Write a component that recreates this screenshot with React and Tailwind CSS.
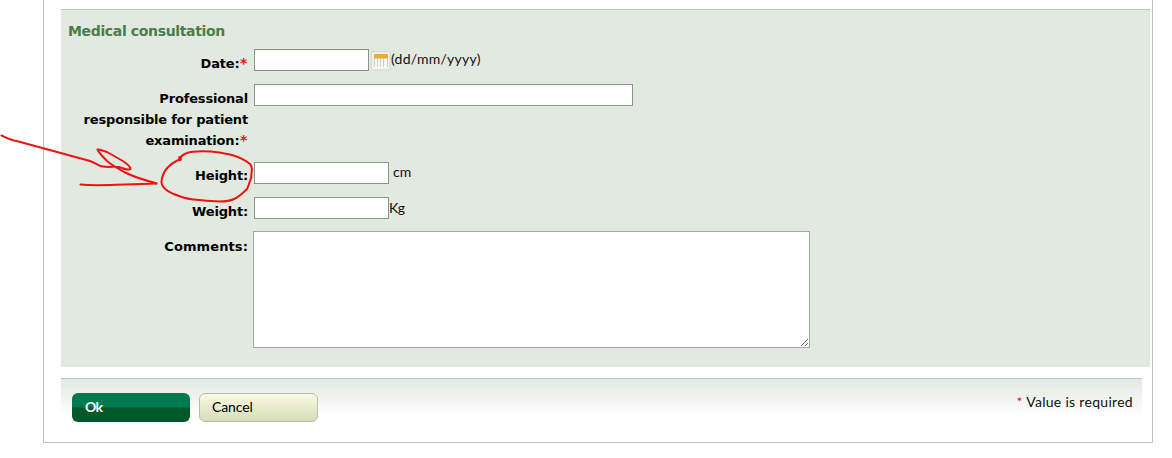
const inputClass = 'block h-[22px] flex-shrink-0 border border-[#8a968c] bg-white outline-none'
const hintClass = 'whitespace-nowrap [font-family:Lato,sans-serif] text-[14px] leading-[18px] text-[#111]'

function Row({ label, required, className, labelClass = 'pt-[4px] tracking-[-0.17px]', children }) {
  return (
    <div className={`flex items-start ${className}`}>
      <div
        className={`mr-[6px] w-[187px] flex-shrink-0 pl-[15px] text-right text-[13px] font-bold leading-[21px] text-black ${labelClass}`}
      >
        {label}:
        {required && (
          <span className="ml-[0.5px] inline-block w-[8px] text-left text-[14px] leading-[16px] text-[#e8141c]">*</span>
        )}
      </div>
      {children}
    </div>
  )
}

function CalendarIcon() {
  return (
    <svg className="mt-[2px] ml-[2px] flex-shrink-0" width="20" height="20" viewBox="0 0 20 20">
      <rect x="0.5" y="0.5" width="18.5" height="18.5" rx="1.5" fill="#f1f1ec" stroke="#d5d8d1" />
      <rect x="3" y="7" width="14" height="10" fill="#fdfdfb" />
      <path d="M3.5 7v9M6.5 7v9M9.5 7v9M12.5 7v9M16.5 7v9" stroke="#c9c9c7" />
      <path d="M3 10.5h14M3 13.5h14" stroke="#e3e3e1" strokeWidth="0.7" />
      <rect x="3" y="3" width="14" height="4.500" rx="0.7" fill="#e9ad35" />
    </svg>
  )
}

// Hand-drawn arrow and ring around the Height label
function Annotation() {
  return (
    <svg
      className="pointer-events-none absolute top-[125px] left-0"
      width="270"
      height="90"
      viewBox="0 0 270 90"
      fill="none"
      stroke="#ee1414"
      strokeWidth="2"
      strokeLinecap="round"
      strokeLinejoin="round"
    >
      <path d="M1.5 10.5 C5 12 8 14 14 15.5 C22 17 27 19 35 21 L90 36 C96 38 98 41 103 41.5 C112 43 117 40 122 43 C126 45 131 45 130.500 43.500 C130 41 126 38 122 35.500 L107 27 C102 25 99 24 97.500 24.500 C98 27 103 32 107 36 C113 41 119 44 124 47 C136 53 145 55 156.500 58.500" />
      <path d="M80.500 59.500 C100 61.500 123 59 156.500 58.500" />
      <path d="M180.500 34 C169 39 162 47 161.500 57 C161.500 64 170 68 179 71 C185 73.500 190 74.500 199 75 C213 76.500 226 78 234 74 C239 72 244 67 247 64 C249 60 250 56 251 53 C252 45 252.500 42 250 39 C244 34 236 31 230 29.500 C223 28 218 27 211 26.500 C201 26 192 26 187 28 C184 29 181 31 179.500 34" />
      <path d="M180 32.500v2" strokeWidth="3.5" />
    </svg>
  )
}

export default function App() {
  return (
    <div className="relative h-[458px] w-[1172px] overflow-hidden bg-white [font-family:'DejaVu_Sans',Verdana,sans-serif]">
      <div className="ml-[43px] h-[443px] w-[1110px] border-x border-b border-[#bcc4c0] pt-[9px] pl-[17px]">
        {/* Form panel */}
        <div className="h-[358px] w-[1089px] border-t border-[#bcc8c0] bg-[#e1e9e0]">
          <h2 className="h-[39px] pt-[11px] pl-[7px] text-[14px] font-bold leading-[20px] tracking-[-0.35px] text-[#4a7d4c]">
            Medical consultation
          </h2>

          <Row label="Date" required className="h-[35px]">
            <input className={`${inputClass} w-[115px]`} />
            <CalendarIcon />
            <span className={`${hintClass} mt-px tracking-[0.25px]`}>(dd/mm/yyyy)</span>
          </Row>
          <Row label="Professional responsible for patient examination" required className="h-[78px]">
            <input className={`${inputClass} w-[379px]`} />
          </Row>
          <Row label="Height" labelClass="pt-[3px] tracking-[-0.17px]" className="h-[35px]">
            <input className={`${inputClass} w-[135px]`} />
            <span className={`${hintClass} mt-px ml-[4px]`}>cm</span>
          </Row>
          <Row label="Weight" className="h-[34px]">
            <input className={`${inputClass} w-[135px]`} />
            <span className={`${hintClass} mt-[2px] tracking-[-0.4px]`}>Kg</span>
          </Row>
          <Row label="Comments" labelClass="pt-[5px] tracking-[0.1px]" className="h-[118px]">
            <textarea className="-ml-px block h-[117px] w-[557px] resize border border-[#a2aaa4] bg-white outline-none" />
          </Row>
        </div>

        {/* Actions */}
        <div className="mt-[11px] flex h-[50px] w-[1081px] items-start border-t border-[#b9c6be] bg-linear-to-b from-[#e1e9e2] to-white to-75% pt-[14px] pr-[9px] pl-[11px]">
          <button className="h-[29px] w-[118px] rounded-[6px] bg-linear-to-b from-[#007a50] from-48% to-[#005a28] to-52% pb-[2px] pl-[13px] text-left [font-family:Lato,sans-serif] text-[14px] font-bold tracking-[-0.8px] text-white">
            Ok
          </button>
          <button className="ml-[9px] h-[29px] w-[119px] rounded-[6px] border border-[#b9bda4] bg-linear-to-b from-[#fafbe4] to-[#d6dcba] pb-[2px] pl-[12px] text-left [font-family:Lato,sans-serif] text-[14px] tracking-[-0.1px] text-black">
            Cancel
          </button>
          <div className={`${hintClass} ml-auto tracking-[0.3px]`}>
            <span className="text-[#e8141c]">*</span> Value is required
          </div>
        </div>
      </div>
      <Annotation />
    </div>
  )
}
